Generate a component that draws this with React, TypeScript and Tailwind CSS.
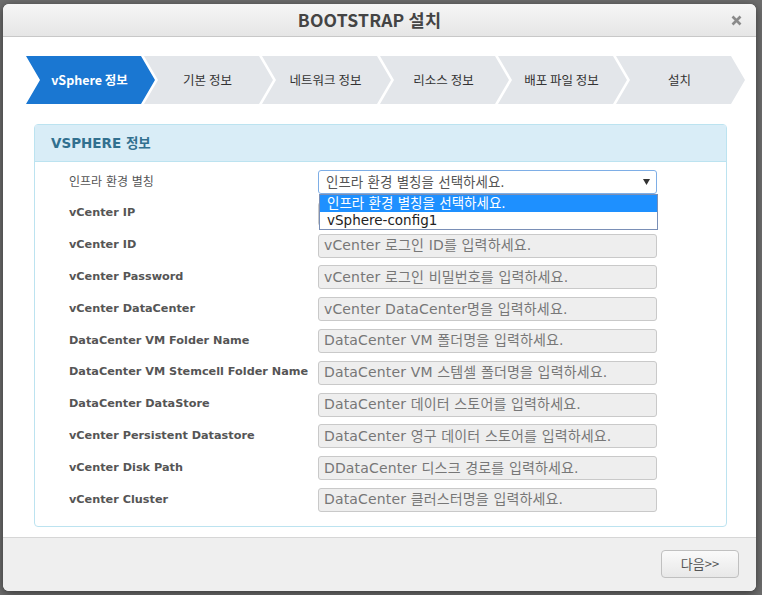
import React from "react";

const steps = ["vSphere 정보", "기본 정보", "네트워크 정보", "리소스 정보", "배포 파일 정보", "설치"];

const rows: { label: string; placeholder: string }[] = [
  { label: "vCenter IP", placeholder: "" },
  { label: "vCenter ID", placeholder: "vCenter 로그인 ID를 입력하세요." },
  { label: "vCenter Password", placeholder: "vCenter 로그인 비밀번호를 입력하세요." },
  { label: "vCenter DataCenter", placeholder: "vCenter DataCenter명을 입력하세요." },
  { label: "DataCenter VM Folder Name", placeholder: "DataCenter VM 폴더명을 입력하세요." },
  { label: "DataCenter VM Stemcell Folder Name", placeholder: "DataCenter VM 스템셀 폴더명을 입력하세요." },
  { label: "DataCenter DataStore", placeholder: "DataCenter 데이터 스토어를 입력하세요." },
  { label: "vCenter Persistent Datastore", placeholder: "DataCenter 영구 데이터 스토어를 입력하세요." },
  { label: "vCenter Disk Path", placeholder: "DDataCenter 디스크 경로를 입력하세요." },
  { label: "vCenter Cluster", placeholder: "DataCenter 클러스터명을 입력하세요." },
];

function Step({ label, index }: { label: string; index: number }) {
  const active = index === 0;
  return (
    <div
      className={
        "h-[48px] w-[129px] shrink-0 flex items-center justify-center text-[12.5px] pr-[2px] [clip-path:polygon(0_0,calc(100%-14px)_0,100%_50%,calc(100%-14px)_100%,0_100%,14px_50%)] " +
        (active ? "bg-[#1a77d2] text-white font-bold" : "bg-[#e3e6ea] text-[#333] -ml-[11px]")
      }
    >
      {label}
    </div>
  );
}

export default function App() {
  const font = "font-['DejaVu_Sans','Noto_Sans_CJK_KR',sans-serif]";
  return (
    <div className="w-[762px] h-[595px] bg-[#6d6d6d] pt-[4px] pl-[3px] overflow-hidden">
      <div className="w-[753px] h-[587px] bg-white rounded-[6px] flex flex-col overflow-hidden shadow-[0_2px_8px_rgba(0,0,0,0.5)]">
        {/* header */}
        <div className="h-[33px] shrink-0 relative flex items-center justify-center bg-gradient-to-b from-[#f6f6f6] to-[#e6e6e6] border-b border-[#c8c8c8]">
          <span className="font-['Noto_Sans_CJK_KR',sans-serif] font-bold text-[17.5px] text-[#444] tracking-[0.2px] pr-[20px]">
            BOOTSTRAP 설치
          </span>
          <svg className="absolute right-[14px] top-[11px]" width="11" height="11" viewBox="0 0 11 11">
            <path d="M1.5 1.5 L9.5 9.5 M9.5 1.5 L1.5 9.5" stroke="#8a8a8a" strokeWidth="2.6" strokeLinecap="butt" />
          </svg>
        </div>

        {/* body */}
        <div className="h-[500px] shrink-0 pt-[19px] pl-[23px] pr-[29px] font-['Noto_Sans_CJK_KR',sans-serif]">
          <div className="flex">
            {steps.map((s, i) => (
              <Step key={s} label={s} index={i} />
            ))}
          </div>

          <div className="mt-[20px] ml-[8px] border border-[#bce3f0] rounded-[4px]">
            <div className="h-[37px] bg-[#d9edf7] border-b border-[#bce3f0] flex items-center pl-[16px]">
              <span className={"font-['DejaVu_Sans','Noto_Sans_CJK_KR',sans-serif] font-bold text-[13.5px] text-[#31708f]"}>
                VSPHERE 정보
              </span>
            </div>
            <div className="relative pt-[8px] pb-[14px] pl-[34px] flex flex-col gap-[7.8px]">
              <div className="flex items-center h-[24px]">
                <div className={font + " w-[249px] text-[12px] text-[#555]"}>인프라 환경 별칭</div>
                <div className="relative w-[339px] h-[24px] border border-[#7eaee6] rounded-[3px] bg-white flex items-center pl-[7px] pr-[6px]">
                  <span className={font + " text-[13.5px] text-[#555]"}>인프라 환경 별칭을 선택하세요.</span>
                  <svg className="ml-auto" width="7" height="6" viewBox="0 0 7 6">
                    <path d="M0 0 H7 L3.5 6 Z" fill="#333" />
                  </svg>
                </div>
              </div>
              {rows.map((r) => (
                <div key={r.label} className="flex items-center h-[24px]">
                  <div className={font + " w-[249px] text-[11.25px] font-bold text-[#555] whitespace-nowrap"}>{r.label}</div>
                  <div className="w-[339px] h-[24px] border border-[#c9c9c9] rounded-[3px] bg-[#eeeeee] flex items-center px-[5px]">
                    <span className={font + " text-[14px] text-[#777] whitespace-nowrap tracking-[0.15px]"}>{r.placeholder}</span>
                  </div>
                </div>
              ))}

              {/* open dropdown */}
              <div className="absolute left-[284px] top-[32px] w-[339px] bg-white border border-[#7a8fb6] flex flex-col">
                <div className={font + " h-[17px] bg-[#1e90ff] text-white text-[13.5px] leading-[17px] px-[7px]"}>
                  인프라 환경 별칭을 선택하세요.
                </div>
                <div className={font + " h-[17px] text-[#222] text-[13.5px] leading-[17px] px-[7px]"}>vSphere-config1</div>
              </div>
            </div>
          </div>
        </div>

        {/* footer */}
        <div className="flex-1 bg-[#efefef] border-t border-[#d6d6d6] flex items-start justify-end pt-[12px] pr-[17px]">
          <button className="w-[78px] h-[28px] rounded-[4px] border border-[#c0c0c0] bg-gradient-to-b from-[#fafafa] to-[#e8e8e8] text-[13px] text-[#555] font-['Noto_Sans_CJK_KR',sans-serif]">
            다음&gt;&gt;
          </button>
        </div>
      </div>
    </div>
  );
}
